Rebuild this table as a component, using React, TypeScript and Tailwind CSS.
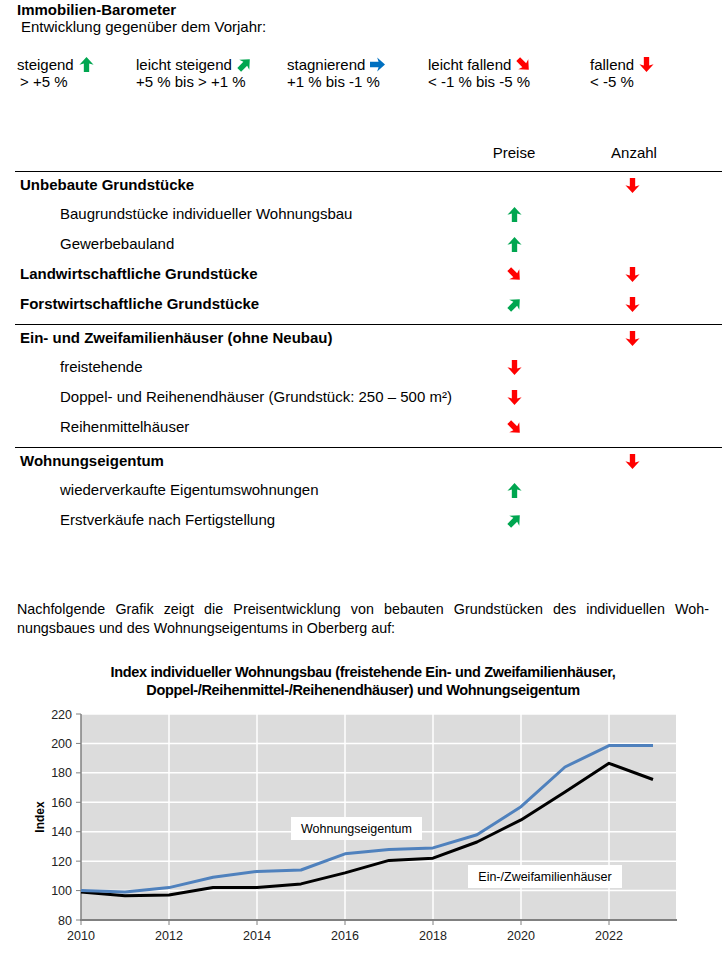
const GREEN = '#00a650';
const RED = '#ff0000';
const BLUE = '#0070c0';

type Dir = 'up' | 'upright' | 'right' | 'downright' | 'down';

const rot: Record<Dir, number> = { up: 0, upright: 45, right: 90, downright: 135, down: 180 };
const col: Record<Dir, string> = { up: GREEN, upright: GREEN, right: BLUE, downright: RED, down: RED };

const Arrow = ({ dir, size = 15 }: { dir: Dir; size?: number }) => (
  <svg width={size} height={size} viewBox="0 0 14 14" className="inline-block shrink-0">
    <polygon
      points="7,0 13.6,7.3 9.5,6 9.5,14 4.5,14 4.5,6 0.4,7.3"
      fill={col[dir]}
      transform={`rotate(${rot[dir]} 7 7)`}
    />
  </svg>
);

const legend: { label: string; range: string; dir: Dir; w: string }[] = [
  { label: 'steigend', range: '> +5 %', dir: 'up', w: 'w-[119px]' },
  { label: 'leicht steigend', range: '+5 % bis > +1 %', dir: 'upright', w: 'w-[151px]' },
  { label: 'stagnierend', range: '+1 % bis -1 %', dir: 'right', w: 'w-[141px]' },
  { label: 'leicht fallend', range: '< -1 % bis -5 %', dir: 'downright', w: 'w-[162px]' },
  { label: 'fallend', range: '< -5 %', dir: 'down', w: 'w-[120px]' },
];

type Row = { label: string; bold?: boolean; preise?: Dir; anzahl?: Dir };

const groups: Row[][] = [
  [
    { label: 'Unbebaute Grundstücke', bold: true, anzahl: 'down' },
    { label: 'Baugrundstücke individueller Wohnungsbau', preise: 'up' },
    { label: 'Gewerbebauland', preise: 'up' },
    { label: 'Landwirtschaftliche Grundstücke', bold: true, preise: 'downright', anzahl: 'down' },
    { label: 'Forstwirtschaftliche Grundstücke', bold: true, preise: 'upright', anzahl: 'down' },
  ],
  [
    { label: 'Ein- und Zweifamilienhäuser (ohne Neubau)', bold: true, anzahl: 'down' },
    { label: 'freistehende', preise: 'down' },
    { label: 'Doppel- und Reihenendhäuser (Grundstück: 250 – 500 m²)', preise: 'down' },
    { label: 'Reihenmittelhäuser', preise: 'downright' },
  ],
  [
    { label: 'Wohnungseigentum', bold: true, anzahl: 'down' },
    { label: 'wiederverkaufte Eigentumswohnungen', preise: 'up' },
    { label: 'Erstverkäufe nach Fertigstellung', preise: 'upright' },
  ],
];

// index values 2010..2023
const wohnung = [100, 99, 102, 109, 113, 114, 125, 128, 129, 138, 157, 184, 198.5, 198.5];
const efh = [99, 96.5, 97, 102, 102, 104.5, 112, 120.5, 122, 133, 148, 167, 186.5, 175.5];

const px = (i: number) => 81 + i * 44;
const py = (v: number) => 220 - (v - 80) * (206 / 140);
const toPts = (d: number[]) => d.map((v, i) => `${px(i)},${py(v).toFixed(1)}`).join(' ');

const Chart = () => {
  const yTicks = [80, 100, 120, 140, 160, 180, 200, 220];
  const xTicks = [2010, 2012, 2014, 2016, 2018, 2020, 2022];
  return (
    <svg width={726} height={253} className="block" style={{ fontFamily: '"Liberation Sans", Arial, sans-serif' }}>
      <rect x={81} y={14} width={595} height={206} fill="#dcdcdc" />
      {yTicks.slice(1).map((t) => (
        <line key={t} x1={81} x2={676} y1={py(t)} y2={py(t)} stroke="#ffffff" strokeWidth={1.5} />
      ))}
      {xTicks.slice(1).map((t) => (
        <line key={t} x1={px(t - 2010)} x2={px(t - 2010)} y1={14} y2={220} stroke="#ffffff" strokeWidth={1.5} />
      ))}
      <line x1={81} x2={81} y1={14} y2={221} stroke="#808080" strokeWidth={1.5} />
      <line x1={80} x2={677} y1={220} y2={220} stroke="#808080" strokeWidth={2} />
      {yTicks.map((t) => (
        <g key={t}>
          <line x1={76} x2={81} y1={py(t)} y2={py(t)} stroke="#808080" strokeWidth={1} />
          <text x={72} y={py(t) + 4.5} fontSize={12.5} textAnchor="end" fill="#222">
            {t}
          </text>
        </g>
      ))}
      {xTicks.map((t) => (
        <g key={t}>
          <line x1={px(t - 2010)} x2={px(t - 2010)} y1={220} y2={225} stroke="#808080" strokeWidth={1} />
          <text x={px(t - 2010)} y={240} fontSize={12.5} textAnchor="middle" fill="#222">
            {t}
          </text>
        </g>
      ))}
      <text x={44} y={117} fontSize={12} fontWeight="bold" textAnchor="middle" transform="rotate(-90 44 117)">
        Index
      </text>
      <polyline points={toPts(efh)} fill="none" stroke="#000000" strokeWidth={3} strokeLinejoin="round" />
      <polyline points={toPts(wohnung)} fill="none" stroke="#4f81bd" strokeWidth={3} strokeLinejoin="round" />
      <rect x={291} y={117} width={131} height={23} fill="#ffffff" />
      <text x={356.5} y={133} fontSize={12.5} textAnchor="middle">
        Wohnungseigentum
      </text>
      <rect x={468} y={165} width={154} height={23} fill="#ffffff" />
      <text x={545} y={181} fontSize={12.5} textAnchor="middle">
        Ein-/Zweifamilienhäuser
      </text>
    </svg>
  );
};

export default function App() {
  return (
    <div
      className="w-[726px] h-[953px] overflow-hidden bg-white text-black text-[15px]"
      style={{ fontFamily: '"Liberation Sans", Arial, sans-serif' }}
    >
      <div className="pt-[1px] pl-[17px] leading-[17px]">
        <div className="font-bold">Immobilien-Barometer</div>
        <div className="pl-[4px]">Entwicklung gegenüber dem Vorjahr:</div>
      </div>

      <div className="mt-[21px] pl-[17px] flex leading-[17px]">
        {legend.map((l, i) => (
          <div key={l.label} className={l.w}>
            <div className="flex items-center gap-[5px]">
              <span>{l.label}</span>
              <Arrow dir={l.dir} size={15} />
            </div>
            <div className={i === 0 ? 'pl-[3px]' : ''}>{l.range}</div>
          </div>
        ))}
      </div>

      <div className="ml-[15px] w-[707px] mt-[54px]">
        <div className="grid grid-cols-[440px_118px_122px] leading-[17px]">
          <div />
          <div className="text-center">Preise</div>
          <div className="text-center">Anzahl</div>
        </div>
        <div className="mt-[10px]">
          {groups.map((g, gi) => (
            <div key={gi} className="border-t-[1.5px] border-black pb-[5px]">
              {g.map((r, ri) => (
                <div
                  key={r.label}
                  className={`grid grid-cols-[440px_118px_122px] items-center ${ri === 0 ? 'h-[27px]' : 'h-[30px]'}`}
                >
                  <div className={r.bold ? 'pl-[5px] font-bold' : 'pl-[45px]'}>{r.label}</div>
                  <div className="flex justify-center">{r.preise && <Arrow dir={r.preise} />}</div>
                  <div className="flex justify-center pr-[4px]">{r.anzahl && <Arrow dir={r.anzahl} />}</div>
                </div>
              ))}
            </div>
          ))}
        </div>
      </div>

      <div className="mt-[60px] pl-[17px] w-[709px] leading-[19px] text-[14.3px]">
        <div className="text-justify [text-align-last:justify]">
          Nachfolgende Grafik zeigt die Preisentwicklung von bebauten Grundstücken des individuellen Woh-
        </div>
        <div>nungsbaues und des Wohnungseigentums in Oberberg auf:</div>
      </div>

      <div className="mt-[25px] text-center font-bold text-[14.5px] leading-[18px] tracking-[-0.35px]">
        <div>Index individueller Wohnungsbau (freistehende Ein- und Zweifamilienhäuser,</div>
        <div>Doppel-/Reihenmittel-/Reihenendhäuser) und Wohnungseigentum</div>
      </div>

      <div className="mt-[1px]">
        <Chart />
      </div>
    </div>
  );
}
